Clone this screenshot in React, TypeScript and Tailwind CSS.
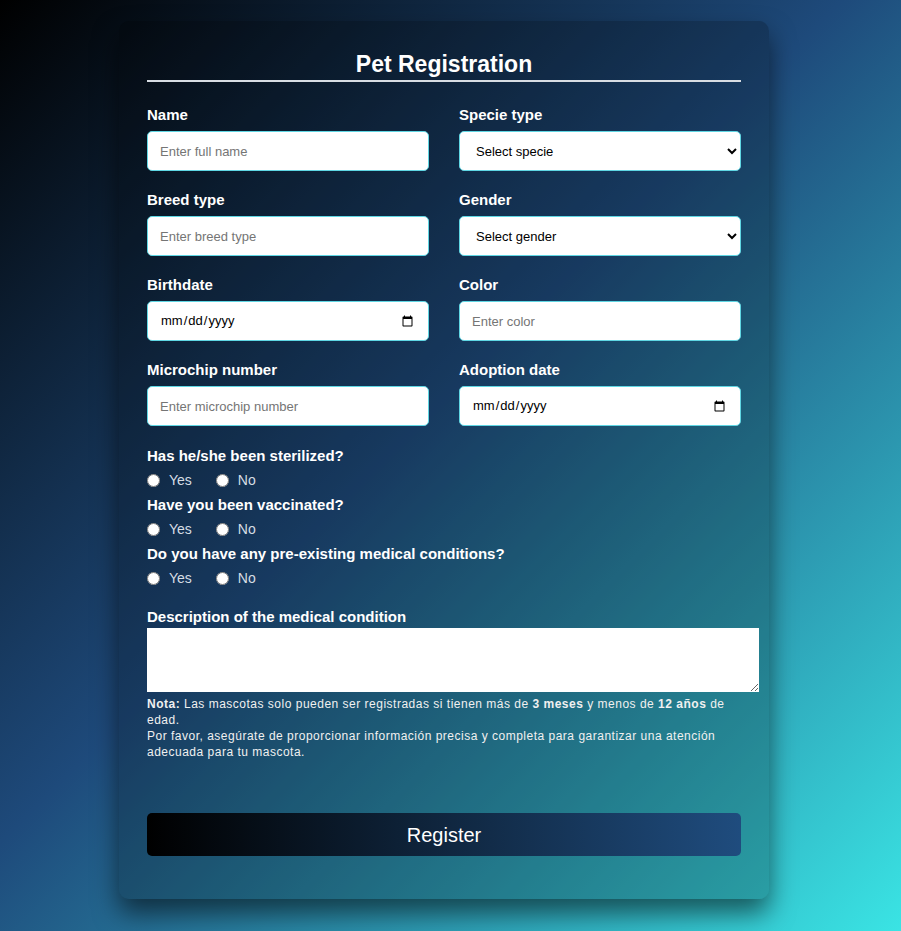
import React from "react";

const font = { fontFamily: '"Liberation Sans", Arial, sans-serif' };

function Field({ label, children }: { label: string; children: React.ReactNode }) {
  return (
    <div className="flex flex-col">
      <label className="text-[15px] font-bold leading-[18px] text-white mb-[7px]">{label}</label>
      {children}
    </div>
  );
}

const inputCls =
  "h-[40px] w-full rounded-[5px] border border-[#5fd6e3] bg-white px-3 text-[13px] text-black placeholder:text-[#757575] outline-none";

function Radios({ q, name }: { q: string; name: string }) {
  return (
    <div className="flex flex-col mb-[5px]">
      <div className="text-[15px] font-bold leading-[18px] text-white mb-[5px]">{q}</div>
      <div className="flex items-center h-[21px] text-[14px] text-[#d6dde4]">
        <input type="radio" name={name} className="m-0 h-[13px] w-[13px]" />
        <span className="ml-[9px] mr-[24px]">Yes</span>
        <input type="radio" name={name} className="m-0 h-[13px] w-[13px]" />
        <span className="ml-[9px]">No</span>
      </div>
    </div>
  );
}

export default function App() {
  return (
    <div
      style={font}
      className="min-h-[931px] w-full bg-[linear-gradient(135deg,#000000_0%,#1e4a7b_46%,#3ae4e4_100%)] flex justify-center pr-[13px] pt-[21px] pb-[32px]"
    >
      <div className="w-[650px] h-[878px] rounded-[10px] bg-black/[0.22] shadow-[0_14px_26px_rgba(0,0,0,0.55)] px-[28px] pt-[29px] pb-[43px]">
        <h2 className="text-center text-[23px] font-bold leading-[28px] text-white pb-[2px] border-b-2 border-[#d8dde3]">
          Pet Registration
        </h2>
        <div className="grid grid-cols-2 gap-x-[30px] gap-y-[20px] mt-[24px]">
          <Field label="Name">
            <input className={inputCls} placeholder="Enter full name" />
          </Field>
          <Field label="Specie type">
            <select className={inputCls} defaultValue="">
              <option value="">Select specie</option>
              <option>Dog</option>
              <option>Cat</option>
            </select>
          </Field>
          <Field label="Breed type">
            <input className={inputCls} placeholder="Enter breed type" />
          </Field>
          <Field label="Gender">
            <select className={inputCls} defaultValue="">
              <option value="">Select gender</option>
              <option>Male</option>
              <option>Female</option>
            </select>
          </Field>
          <Field label="Birthdate">
            <input type="date" className={inputCls} />
          </Field>
          <Field label="Color">
            <input className={inputCls} placeholder="Enter color" />
          </Field>
          <Field label="Microchip number">
            <input className={inputCls} placeholder="Enter microchip number" />
          </Field>
          <Field label="Adoption date">
            <input type="date" className={inputCls} />
          </Field>
        </div>
        <div className="mt-[21px]">
          <Radios q="Has he/she been sterilized?" name="steril" />
          <Radios q="Have you been vaccinated?" name="vacc" />
          <Radios q="Do you have any pre-existing medical conditions?" name="cond" />
        </div>
        <div className="mt-[19px]">
          <label className="block text-[15px] font-bold leading-[18px] text-white mb-[2px]">
            Description of the medical condition
          </label>
          <textarea className="block w-[612px] h-[64px] bg-white border-0 rounded-none outline-none" />
          <p className="mt-[4px] text-[12px] leading-[16px] tracking-[0.5px] text-[#f0f0f0]">
            <b>Nota:</b> Las mascotas solo pueden ser registradas si tienen más de <b>3 meses</b> y menos de{" "}
            <b>12 años</b> de edad.
            <br />
            Por favor, asegúrate de proporcionar información precisa y completa para garantizar una atención
            adecuada para tu mascota.
          </p>
        </div>
        <button className="mt-[53px] w-full h-[43px] rounded-[5px] bg-[linear-gradient(90deg,#000000,#1f4c7e)] text-white text-[20px]">
          Register
        </button>
      </div>
    </div>
  );
}
